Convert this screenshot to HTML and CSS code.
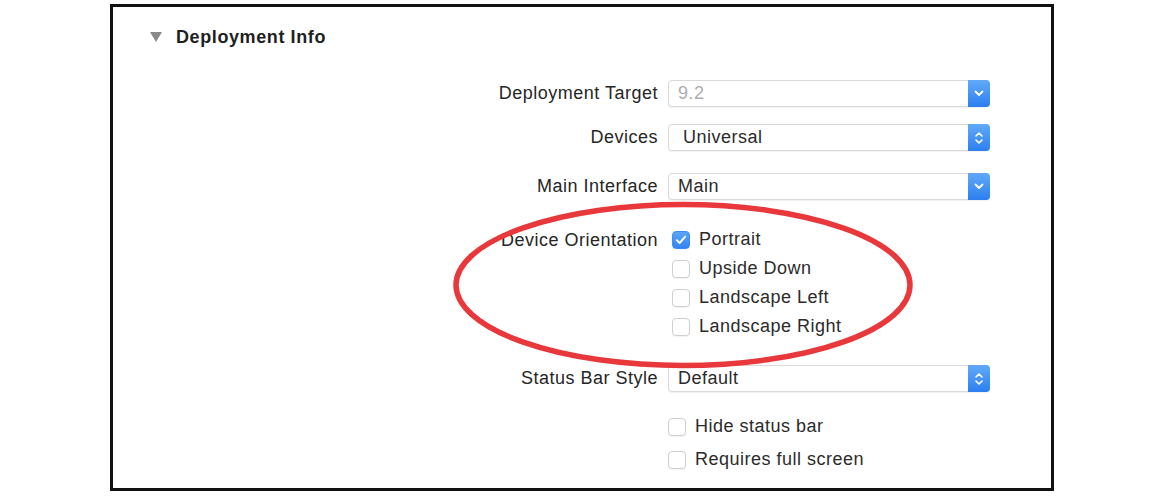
FILE: index.html
```html
<!DOCTYPE html>
<html>
<head>
<meta charset="utf-8">
<link rel="stylesheet" href="styles.css">
</head>
<body>
<div class="frame">
  <div class="section-head">
    <span class="disclosure"></span>
    <span class="section-title">Deployment Info</span>
  </div>

  <div class="form">
    <div class="row row-target">
      <div class="label">Deployment Target</div>
      <div class="select">
        <span class="value muted">9.2</span>
        <span class="pop-btn">
          <svg width="10" height="7" viewBox="0 0 10 7"><path d="M1.5 1.5 L5 5 L8.5 1.5" fill="none" stroke="#fff" stroke-width="1.8" stroke-linecap="round" stroke-linejoin="round"/></svg>
        </span>
      </div>
    </div>

    <div class="row row-devices">
      <div class="label">Devices</div>
      <div class="select">
        <span class="value wide">Universal</span>
        <span class="pop-btn">
          <svg width="10" height="14" viewBox="0 0 10 14"><path d="M2 5 L5 2 L8 5 M2 9 L5 12 L8 9" fill="none" stroke="#fff" stroke-width="1.6" stroke-linecap="round" stroke-linejoin="round"/></svg>
        </span>
      </div>
    </div>

    <div class="row row-main">
      <div class="label">Main Interface</div>
      <div class="select">
        <span class="value">Main</span>
        <span class="pop-btn">
          <svg width="10" height="7" viewBox="0 0 10 7"><path d="M1.5 1.5 L5 5 L8.5 1.5" fill="none" stroke="#fff" stroke-width="1.8" stroke-linecap="round" stroke-linejoin="round"/></svg>
        </span>
      </div>
    </div>

    <div class="row row-orient">
      <div class="label label-top">Device Orientation</div>
      <div class="checks">
        <label class="check"><span class="box checked"><svg width="12" height="10" viewBox="0 0 12 10"><path d="M1.8 5.2 L4.6 8 L10.2 1.6" fill="none" stroke="#fff" stroke-width="1.9" stroke-linecap="round" stroke-linejoin="round"/></svg></span>Portrait</label>
        <label class="check"><span class="box"></span>Upside Down</label>
        <label class="check"><span class="box"></span>Landscape Left</label>
        <label class="check"><span class="box"></span>Landscape Right</label>
      </div>
    </div>

    <div class="row row-status">
      <div class="label">Status Bar Style</div>
      <div class="select">
        <span class="value">Default</span>
        <span class="pop-btn">
          <svg width="10" height="14" viewBox="0 0 10 14"><path d="M2 5 L5 2 L8 5 M2 9 L5 12 L8 9" fill="none" stroke="#fff" stroke-width="1.6" stroke-linecap="round" stroke-linejoin="round"/></svg>
        </span>
      </div>
    </div>

    <div class="row row-extra">
      <div class="label"></div>
      <div class="checks checks-extra">
        <label class="check"><span class="box"></span>Hide status bar</label>
        <label class="check"><span class="box"></span>Requires full screen</label>
      </div>
    </div>
  </div>

  <svg class="highlight" width="480" height="180" viewBox="0 0 480 180">
    <ellipse cx="240" cy="90" rx="227" ry="80.5" fill="none" stroke="#e8383b" stroke-width="5.5"/>
  </svg>
</div>
</body>
</html>
```

FILE: styles.css
```css
html, body {
  margin: 0;
  padding: 0;
  background: #ffffff;
}

body {
  font-family: "Liberation Sans", Arial, sans-serif;
  font-size: 18px;
  letter-spacing: 0.5px;
  color: #2b2b2b;
}

.frame {
  position: relative;
  box-sizing: border-box;
  width: 944px;
  height: 487px;
  margin: 4px 0 0 110px;
  border: 3px solid #111;
  background: #fff;
}

/* section header */
.section-head {
  display: flex;
  align-items: center;
  height: 20px;
  margin-top: 20px;
  padding-left: 37px;
}

.disclosure {
  width: 0;
  height: 0;
  border-left: 6px solid transparent;
  border-right: 6px solid transparent;
  border-top: 10px solid #8a8a8a;
  margin-right: 14px;
}

.section-title {
  font-weight: bold;
  font-size: 18px;
  letter-spacing: 0.6px;
  color: #1f1f1f;
}

/* form */
.form {
  display: flex;
  flex-direction: column;
}

.row {
  display: grid;
  grid-template-columns: 545px 322px;
  column-gap: 10px;
  align-items: center;
}

.row-target { margin-top: 33px; }
.row-devices { margin-top: 17px; }
.row-main { margin-top: 22px; }
.row-orient { margin-top: 25px; align-items: start; }
.row-status { margin-top: 24px; }
.row-extra { margin-top: 18px; }

.label {
  text-align: right;
  white-space: nowrap;
  color: #262626;
}

.label-top {
  line-height: 29px;
  margin-top: 1px;
}

.select {
  position: relative;
  box-sizing: border-box;
  height: 27px;
  display: flex;
  align-items: center;
  border: 1px solid #d9d9d9;
  border-radius: 4px;
  box-shadow: 0 1px 1px rgba(0, 0, 0, 0.06);
  background: #fff;
}

.value {
  flex: 1;
  padding-left: 9px;
  color: #2b2b2b;
}

.value.wide {
  padding-left: 14px;
}

.value.muted {
  color: #adadad;
}

.pop-btn {
  align-self: stretch;
  width: 22px;
  margin: -1px -1px -1px 0;
  border-radius: 0 4px 4px 0;
  background: linear-gradient(#62aaf8, #2c7ff1);
  display: flex;
  align-items: center;
  justify-content: center;
}

/* checkboxes */
.checks {
  display: flex;
  flex-direction: column;
  padding-left: 4px;
}

.checks-extra {
  padding-left: 0;
}

.check {
  display: flex;
  align-items: center;
  height: 29px;
  color: #2b2b2b;
}

.checks-extra .check {
  height: 33px;
}

.box {
  box-sizing: border-box;
  flex: none;
  width: 18px;
  height: 18px;
  margin-right: 9px;
  border: 1px solid #cfcfcf;
  border-radius: 4px;
  background: #fff;
  box-shadow: 0 1px 1px rgba(0, 0, 0, 0.05);
  display: flex;
  align-items: center;
  justify-content: center;
}

.box.checked {
  border-color: #3a8ef6;
  background: linear-gradient(#5aa5f8, #3384f2);
}

/* hand-drawn emphasis ring over the orientation options */
.highlight {
  position: absolute;
  left: 330px;
  top: 188px;
  pointer-events: none;
}
```
